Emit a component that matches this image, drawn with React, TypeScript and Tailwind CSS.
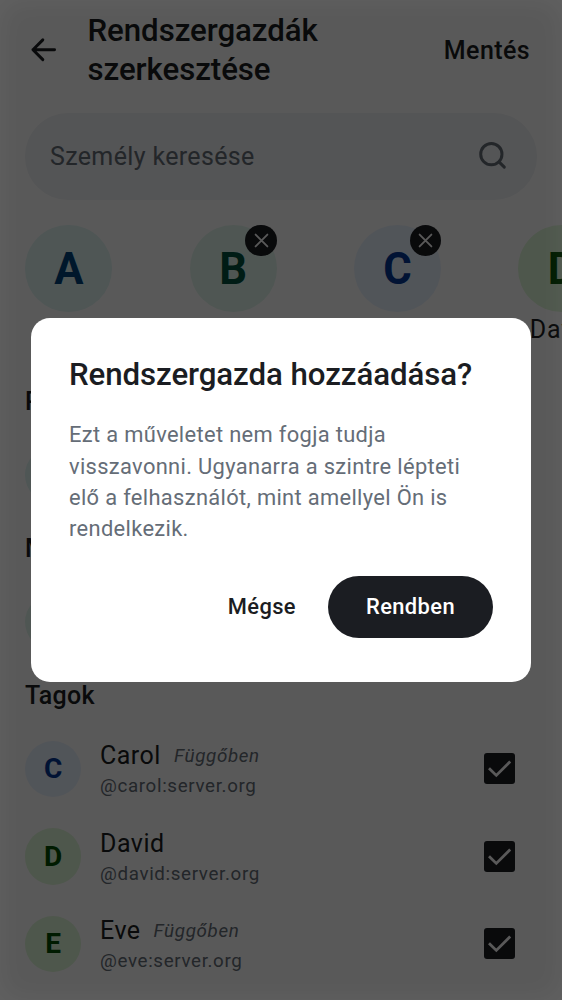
import React from "react";

type Person = { name: string; id: string; letter: string; tone: string; pending?: boolean };

const blue = "bg-[#e9f2ff] text-[#043894]";
const green = "bg-[#e0f8d9] text-[#004f00]";
const teal = "bg-[#e3f7ed] text-[#00513c]";
const cyan = "bg-[#e1f6f4] text-[#00427c]";

const selected: Person[] = [
  { name: "Alice", id: "", letter: "A", tone: cyan },
  { name: "Bob", id: "", letter: "B", tone: teal },
  { name: "Carol", id: "", letter: "C", tone: blue },
  { name: "David", id: "", letter: "D", tone: green },
];

const admins: Person[] = [{ name: "Alice", id: "@alice:server.org", letter: "A", tone: cyan }];
const moderators: Person[] = [{ name: "Bob", id: "@bob:server.org", letter: "B", tone: teal }];
const members: Person[] = [
  { name: "Carol", id: "@carol:server.org", letter: "C", tone: blue, pending: true },
  { name: "David", id: "@david:server.org", letter: "D", tone: green },
  { name: "Eve", id: "@eve:server.org", letter: "E", tone: green, pending: true },
];

function SelectedUser({ person, removable }: { person: Person; removable: boolean }) {
  return (
    <div className="relative flex w-[87.2px] shrink-0 flex-col items-center">
      <div className={`flex size-[87.2px] items-center justify-center rounded-full pt-[2px] text-[43.5px] font-bold ${person.tone}`}>
        {person.letter}
      </div>
      <div className="pl-[2px] text-[25px] leading-[36px] tracking-[0.78px] text-[#1b1d22]">{person.name}</div>
      {removable && (
        <div className="absolute top-0 right-0 flex size-[31.25px] items-center justify-center rounded-full bg-[#1b1d22] text-white">
          <svg viewBox="0 0 20 20" className="size-[31px]" fill="none" stroke="currentColor" strokeWidth="1.2" strokeLinecap="round">
            <path d="M6.2 6.2 13.8 13.8M13.8 6.2 6.2 13.8" />
          </svg>
        </div>
      )}
    </div>
  );
}

function MemberRow({ person }: { person: Person }) {
  return (
    <div className="flex h-[87.5px] items-center pr-[22px]">
      <div className={`flex size-[56.25px] shrink-0 items-center justify-center rounded-full pt-px text-[28px] font-bold ${person.tone}`}>
        {person.letter}
      </div>
      <div className="ml-[18.75px] flex-1 pt-[2px]">
        <div className="flex h-[34px] items-center">
          <span className="text-[25px] leading-[34px] tracking-[0.5px] text-[#1b1d22]">{person.name}</span>
          {person.pending && (
            <span className="ml-[13px] text-[18.75px] tracking-[0.66px] text-[#656d77] italic">Függőben</span>
          )}
        </div>
        <div className="text-[18.75px] leading-[27px] tracking-[0.65px] text-[#656d77]">{person.id}</div>
      </div>
      <div className="flex size-[31px] items-center justify-center rounded-[3px] bg-[#1b1d22] text-white">
        <svg viewBox="0 0 31 31" className="size-[31px]" fill="none" stroke="currentColor" strokeWidth="2.8">
          <path d="M5 15.2 12.3 22.4 26.2 8.6" />
        </svg>
      </div>
    </div>
  );
}

function Section({ title, people }: { title: string; people: Person[] }) {
  return (
    <section>
      <h2 className="flex h-[59.4px] items-center text-[25px] font-medium tracking-[0.25px] text-[#1b1d22]">{title}</h2>
      {people.map((p) => (
        <MemberRow key={p.name} person={p} />
      ))}
    </section>
  );
}

export default function App() {
  return (
    <div className="relative h-[1000px] w-[562px] overflow-hidden bg-white font-[Roboto,sans-serif]">
      <header className="flex h-[100px] items-center pr-[32px] pl-[25px]">
        <svg viewBox="0 0 24 24" className="size-[37.5px] shrink-0 text-[#1b1d22]" fill="none" stroke="currentColor" strokeWidth="1.9" strokeLinecap="round" strokeLinejoin="round">
          <path d="M11.4 5.7 5.1 12l6.3 6.3M5.1 12h13.8" />
        </svg>
        <h1 className="ml-[25px] flex-1 text-[31.25px] leading-[39px] font-medium tracking-[-0.07px] text-[#1b1d22]">
          Rendszergazdák
          <br />
          szerkesztése
        </h1>
        <button className="pt-px text-[25px] font-medium tracking-[0.4px] text-[#1b1d22]">Mentés</button>
      </header>

      <div className="mx-[25px] mt-[12.5px] flex h-[87.2px] items-center justify-between rounded-full bg-[#f0f2f5] pr-[25.5px] pl-[25px]">
        <span className="pt-px text-[25px] tracking-[0.35px] text-[#656d77]">Személy keresése</span>
        <svg viewBox="0 0 24 24" className="size-[37.5px] text-[#656d77]" fill="none" stroke="currentColor" strokeWidth="1.9" strokeLinecap="round">
          <circle cx="11.1" cy="11" r="6.8" />
          <path d="M16 15.9 19.4 19.3" />
        </svg>
      </div>

      <div className="mt-[25.3px] flex h-[147px] gap-[77.15px] pl-[25.2px]">
        {selected.map((p, i) => (
          <SelectedUser key={p.name} person={p} removable={i > 0} />
        ))}
      </div>

      <main className="px-[25px]">
        <Section title="Rendszergazdák" people={admins} />
        <Section title="Moderátorok" people={moderators} />
        <Section title="Tagok" people={members} />
      </main>

      <div className="absolute inset-0 flex items-center justify-center bg-black/65 shadow-[inset_0_0_30px_rgba(255,255,255,0.06)]">
        <div role="dialog" className="flex h-[364px] w-[500px] flex-col rounded-[19px] bg-white px-[38px] pt-[37px]">
          <h2 className="text-[31.25px] leading-[40px] font-medium tracking-[-0.09px] text-[#1b1d22]">Rendszergazda hozzáadása?</h2>
          <p className="mt-[24.3px] text-[21.9px] leading-[31.25px] tracking-[0.33px] text-[#656d77]">
            Ezt a műveletet nem fogja tudja
            <br />
            visszavonni. Ugyanarra a szintre lépteti
            <br />
            elő a felhasználót, mint amellyel Ön is
            <br />
            rendelkezik.
          </p>
          <div className="mt-[31.25px] flex items-center justify-end gap-[32px]">
            <button className="pt-[2px] text-[21.9px] font-medium tracking-[0.4px] text-[#1b1d22]">Mégse</button>
            <button className="h-[62.5px] w-[165px] rounded-full bg-[#1b1d22] pt-[2px] text-[21.9px] font-medium tracking-[0.4px] text-white">
              Rendben
            </button>
          </div>
        </div>
      </div>
    </div>
  );
}
